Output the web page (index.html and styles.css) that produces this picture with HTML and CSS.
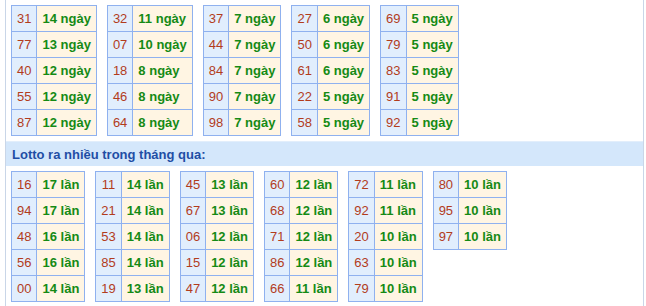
FILE: index.html
```html
<!DOCTYPE html>
<html lang="vi">
<head>
<meta charset="utf-8">
<link rel="stylesheet" href="styles.css">
</head>
<body>
<div class="wrap">
  <div class="group">
    <table class="t"><tr><td class="n">31</td><td class="v">14 ngày</td></tr><tr><td class="n">77</td><td class="v">13 ngày</td></tr><tr><td class="n">40</td><td class="v">12 ngày</td></tr><tr><td class="n">55</td><td class="v">12 ngày</td></tr><tr><td class="n">87</td><td class="v">12 ngày</td></tr></table>
    <table class="t"><tr><td class="n">32</td><td class="v">11 ngày</td></tr><tr><td class="n">07</td><td class="v">10 ngày</td></tr><tr><td class="n">18</td><td class="v">8 ngày</td></tr><tr><td class="n">46</td><td class="v">8 ngày</td></tr><tr><td class="n">64</td><td class="v">8 ngày</td></tr></table>
    <table class="t"><tr><td class="n">37</td><td class="v">7 ngày</td></tr><tr><td class="n">44</td><td class="v">7 ngày</td></tr><tr><td class="n">84</td><td class="v">7 ngày</td></tr><tr><td class="n">90</td><td class="v">7 ngày</td></tr><tr><td class="n">98</td><td class="v">7 ngày</td></tr></table>
    <table class="t"><tr><td class="n">27</td><td class="v">6 ngày</td></tr><tr><td class="n">50</td><td class="v">6 ngày</td></tr><tr><td class="n">61</td><td class="v">6 ngày</td></tr><tr><td class="n">22</td><td class="v">5 ngày</td></tr><tr><td class="n">58</td><td class="v">5 ngày</td></tr></table>
    <table class="t"><tr><td class="n">69</td><td class="v">5 ngày</td></tr><tr><td class="n">79</td><td class="v">5 ngày</td></tr><tr><td class="n">83</td><td class="v">5 ngày</td></tr><tr><td class="n">91</td><td class="v">5 ngày</td></tr><tr><td class="n">92</td><td class="v">5 ngày</td></tr></table>
  </div>
  <div class="head">Lotto ra nhiều trong tháng qua:</div>
  <div class="group">
    <table class="t"><tr><td class="n">16</td><td class="v">17 lần</td></tr><tr><td class="n">94</td><td class="v">17 lần</td></tr><tr><td class="n">48</td><td class="v">16 lần</td></tr><tr><td class="n">56</td><td class="v">16 lần</td></tr><tr><td class="n">00</td><td class="v">14 lần</td></tr></table>
    <table class="t"><tr><td class="n">11</td><td class="v">14 lần</td></tr><tr><td class="n">21</td><td class="v">14 lần</td></tr><tr><td class="n">53</td><td class="v">14 lần</td></tr><tr><td class="n">85</td><td class="v">14 lần</td></tr><tr><td class="n">19</td><td class="v">13 lần</td></tr></table>
    <table class="t"><tr><td class="n">45</td><td class="v">13 lần</td></tr><tr><td class="n">67</td><td class="v">13 lần</td></tr><tr><td class="n">06</td><td class="v">12 lần</td></tr><tr><td class="n">15</td><td class="v">12 lần</td></tr><tr><td class="n">47</td><td class="v">12 lần</td></tr></table>
    <table class="t"><tr><td class="n">60</td><td class="v">12 lần</td></tr><tr><td class="n">68</td><td class="v">12 lần</td></tr><tr><td class="n">71</td><td class="v">12 lần</td></tr><tr><td class="n">86</td><td class="v">12 lần</td></tr><tr><td class="n">66</td><td class="v">11 lần</td></tr></table>
    <table class="t"><tr><td class="n">72</td><td class="v">11 lần</td></tr><tr><td class="n">92</td><td class="v">11 lần</td></tr><tr><td class="n">20</td><td class="v">10 lần</td></tr><tr><td class="n">63</td><td class="v">10 lần</td></tr><tr><td class="n">79</td><td class="v">10 lần</td></tr></table>
    <table class="t"><tr><td class="n">80</td><td class="v">10 lần</td></tr><tr><td class="n">95</td><td class="v">10 lần</td></tr><tr><td class="n">97</td><td class="v">10 lần</td></tr></table>
  </div>
</div>
</body>
</html>
```

FILE: styles.css
```css
html, body {
  margin: 0;
  padding: 0;
  background: #ffffff;
}
body {
  font-family: "Liberation Sans", Arial, sans-serif;
  font-size: 13px;
}
.wrap {
  margin-left: 5px;
  width: 639px;
  border-left: 1px solid #c9d6e8;
  border-right: 1px solid #c9d6e8;
  min-height: 306px;
  box-sizing: border-box;
}
.group {
  display: flex;
  align-items: flex-start;
  gap: 10px;
  padding: 5px 5px 0 5px;
}
.head {
  margin-top: 5px;
  height: 25px;
  line-height: 25px;
  background: #d4e7fb;
  border-top: 1px solid #e2eefb;
  box-sizing: border-box;
  padding-left: 6px;
  color: #1f4ea5;
  font-weight: bold;
  font-size: 13px;
}
.t {
  border-collapse: collapse;
  border: 1px solid #8fb1ef;
}
.t td {
  border: 1px solid #8fb1ef;
  height: 26px;
  padding: 0 5px;
  box-sizing: border-box;
  white-space: nowrap;
}
.t .n {
  background: #e1eefd;
  color: #b23c1c;
  text-align: center;
}
.t .v {
  background: #fff5e3;
  color: #158a15;
  font-weight: bold;
  text-align: left;
}
```
